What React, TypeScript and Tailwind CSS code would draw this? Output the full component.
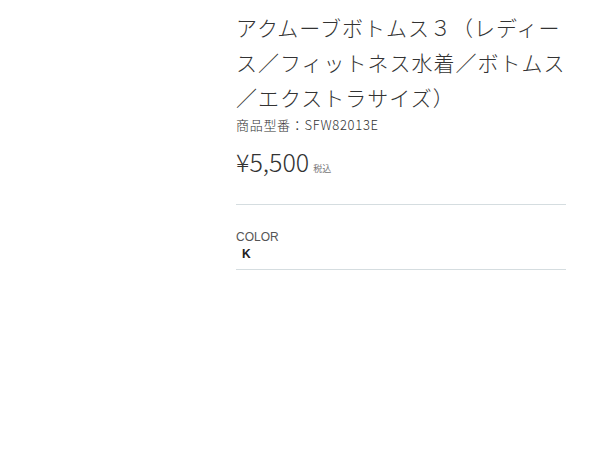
export default function App() {
    return (
        <div className="flex min-h-[450px] w-[600px] bg-white font-['Noto_Sans_CJK_JP','Noto_Sans',sans-serif] text-[#333]">
            <div className="w-[236px] shrink-0" />
            <div className="w-[330px] pt-[10px]">
                <h1 className="text-[21px] font-light leading-[35px] tracking-[1px] text-[#333]">
                    アクムーブボトムス３（レディース／フィットネス水着／ボトムス／エクストラサイズ）
                </h1>
                <p className="mt-[1px] text-[13px] font-light leading-[18px] tracking-[0.7px] text-[#333]">商品型番：SFW82013E</p>
                <div className="mt-[10px] flex items-baseline gap-[4px]">
                    <span className="text-[25px] font-light leading-[34px] text-[#333]">¥5,500</span>
                    <span className="text-[9px] text-[#777]">税込</span>
                </div>
                <div className="mt-[26px] border-t border-[#d5dde0]" />
                <div className="pt-[24px] pb-[6px]">
                    <p className="font-['Liberation_Sans',sans-serif] text-[12px] leading-[16px] text-[#555]">COLOR</p>
                    <p className="pl-[6px] font-['Liberation_Sans',sans-serif] text-[12px] font-semibold leading-[18px] text-[#222]">K</p>
                </div>
                <div className="border-t border-[#d5dde0]" />
            </div>
        </div>
    );
}
